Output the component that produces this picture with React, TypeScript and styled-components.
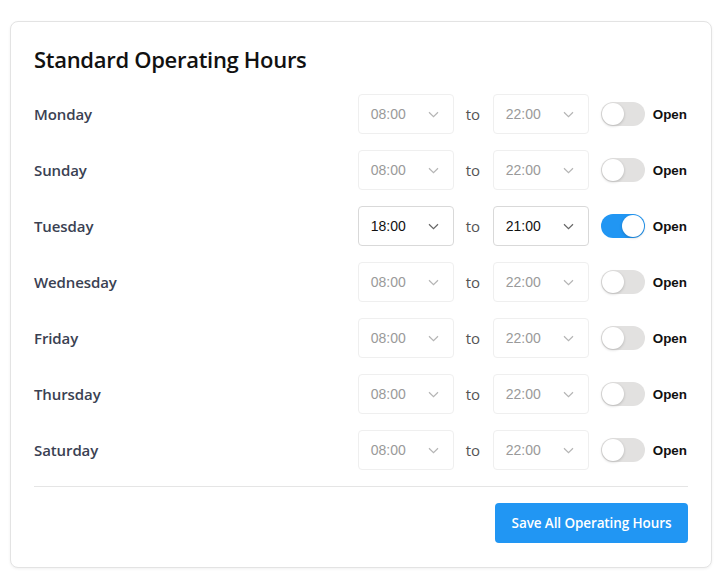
import React, { useState } from "react";
import styled, { createGlobalStyle } from "styled-components";

const Global = createGlobalStyle`
  html, body { margin: 0; padding: 0; background: #ffffff; }
  body { font-family: "Open Sans", "Noto Sans", sans-serif; }
  * { box-sizing: border-box; }
`;

const Page = styled.div`
  padding: 21px 12px 9px 10px;
`;

const Card = styled.div`
  border: 1px solid #e3e3e3;
  border-radius: 8px;
  background: #fff;
  box-shadow: 0 1px 3px rgba(0, 0, 0, 0.06);
  padding: 22px 23px 24px 23px;
`;

const Title = styled.h2`
  margin: 0 0 20px 0;
  font-family: "Open Sans", sans-serif;
  font-weight: 600;
  font-size: 22px;
  line-height: 30px;
  color: #111;
  letter-spacing: -0.3px;
`;

const Rows = styled.div`
  display: flex;
  flex-direction: column;
  gap: 16px;
`;

const Row = styled.div`
  display: flex;
  align-items: center;
  justify-content: space-between;
  height: 40px;
`;

const DayLabel = styled.span`
  font-family: "Open Sans", sans-serif;
  font-weight: 600;
  font-size: 15px;
  color: #3a4152;
  letter-spacing: -0.1px;
`;

const Controls = styled.div`
  display: flex;
  align-items: center;
  padding-right: 1px;
`;

const Select = styled.div<{ $active: boolean }>`
  width: 96px;
  height: 40px;
  display: flex;
  align-items: center;
  justify-content: space-between;
  padding: 0 14px 0 12px;
  border: 1px solid ${(p) => (p.$active ? "#d9d9d9" : "#efefef")};
  border-radius: 4px;
  font-family: "Liberation Sans", Arial, sans-serif;
  font-size: 14px;
  color: ${(p) => (p.$active ? "#111" : "#9a9a9a")};
  background: #fff;
`;

const Chevron = styled.svg<{ $active: boolean }>`
  width: 11px;
  height: 7px;
  stroke: ${(p) => (p.$active ? "#666" : "#b5b5b5")};
  fill: none;
  stroke-width: 1.2;
`;

const To = styled.span`
  margin: 0 12px 0 12px;
  width: 15px;
  font-family: "Open Sans", sans-serif;
  font-size: 15px;
  color: #555;
`;

const Toggle = styled.div<{ $on: boolean }>`
  width: 44px;
  height: 24px;
  border-radius: 12px;
  margin: 0 8px 0 12px;
  background: ${(p) => (p.$on ? "#2196f3" : "#e2e1e0")};
  display: flex;
  align-items: center;
  justify-content: ${(p) => (p.$on ? "flex-end" : "flex-start")};
  padding: 0 1px;
  cursor: pointer;
`;

const Knob = styled.div`
  width: 22px;
  height: 22px;
  border-radius: 50%;
  background: #fff;
  box-shadow: 0 1px 3px rgba(0, 0, 0, 0.2);
`;

const OpenLabel = styled.span`
  font-family: "Liberation Sans", Arial, sans-serif;
  font-weight: 700;
  font-size: 13.4px;
  color: #111;
`;

const Divider = styled.hr`
  border: none;
  border-top: 1px solid #e5e5e5;
  margin: 16px 0 16px 0;
`;

const Footer = styled.div`
  display: flex;
  justify-content: flex-end;
`;

const SaveButton = styled.button`
  height: 40px;
  width: 193px;
  border: none;
  border-radius: 4px;
  background: #2196f3;
  color: #fff;
  font-family: "Open Sans", sans-serif;
  font-weight: 600;
  font-size: 13.5px;
  letter-spacing: -0.1px;
  cursor: pointer;
`;

type Day = { name: string; from: string; to: string; open: boolean };

const initial: Day[] = [
  { name: "Monday", from: "08:00", to: "22:00", open: false },
  { name: "Sunday", from: "08:00", to: "22:00", open: false },
  { name: "Tuesday", from: "18:00", to: "21:00", open: true },
  { name: "Wednesday", from: "08:00", to: "22:00", open: false },
  { name: "Friday", from: "08:00", to: "22:00", open: false },
  { name: "Thursday", from: "08:00", to: "22:00", open: false },
  { name: "Saturday", from: "08:00", to: "22:00", open: false },
];

const TimeSelect = ({ value, active }: { value: string; active: boolean }) => (
  <Select $active={active}>
    <span>{value}</span>
    <Chevron $active={active} viewBox="0 0 11 7">
      <path d="M1 1.2 L5.5 5.6 L10 1.2" />
    </Chevron>
  </Select>
);

export default function App() {
  const [days, setDays] = useState(initial);
  return (
    <Page>
      <Global />
      <Card>
        <Title>Standard Operating Hours</Title>
        <Rows>
          {days.map((d, i) => (
            <Row key={d.name}>
              <DayLabel>{d.name}</DayLabel>
              <Controls>
                <TimeSelect value={d.from} active={d.open} />
                <To>to</To>
                <TimeSelect value={d.to} active={d.open} />
                <Toggle
                  $on={d.open}
                  onClick={() =>
                    setDays(days.map((x, j) => (j === i ? { ...x, open: !x.open } : x)))
                  }
                >
                  <Knob />
                </Toggle>
                <OpenLabel>Open</OpenLabel>
              </Controls>
            </Row>
          ))}
        </Rows>
        <Divider />
        <Footer>
          <SaveButton>Save All Operating Hours</SaveButton>
        </Footer>
      </Card>
    </Page>
  );
}
